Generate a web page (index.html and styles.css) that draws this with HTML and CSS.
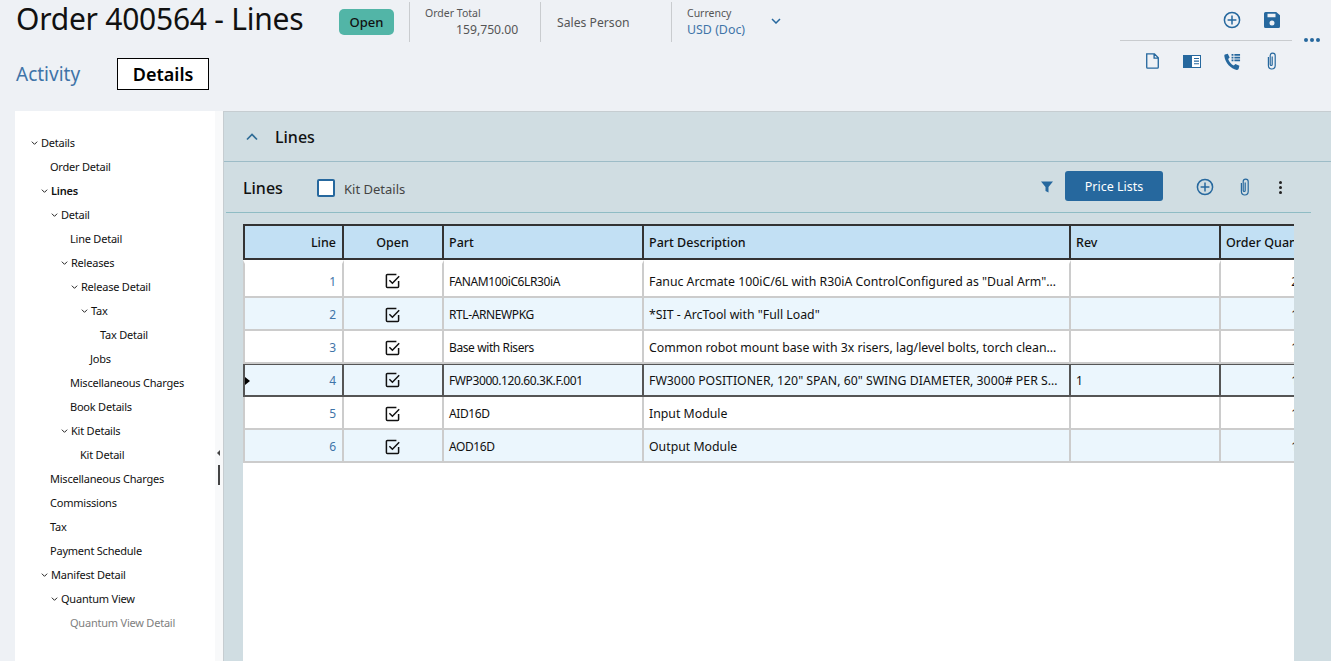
FILE: index.html
```html
<!DOCTYPE html>
<html lang="en">
<head>
    <meta charset="UTF-8">
    <title>Order 400564 - Lines</title>
    <link rel="stylesheet" href="styles.css">
</head>
<body>
<svg class="defs" width="0" height="0">
    <symbol id="chev-down" viewBox="0 0 10 6"><path d="M1 1l4 4 4-4" fill="none" stroke="currentColor" stroke-width="1.5"/></symbol>
    <symbol id="plus-circle" viewBox="0 0 18 18"><circle cx="9" cy="9" r="7.6" fill="none" stroke="currentColor" stroke-width="1.5"/><path d="M9 4.6v8.8M4.6 9h8.8" stroke="currentColor" stroke-width="1.5"/></symbol>
    <symbol id="clip" viewBox="0 0 12 18"><path d="M6.200 4.500v8a1 1 0 0 1-2 0V3.600a2.500 2.500 0 0 1 5 0v10a3.400 3.400 0 0 1-6.800 0V5" fill="none" stroke="currentColor" stroke-width="1.200"/></symbol>
    <symbol id="check" viewBox="0 0 16 16"><path d="M13.6 8v5.4a1 1 0 0 1-1 1H2.4a1 1 0 0 1-1-1V2.6a1 1 0 0 1 1-1h9" fill="none" stroke="#111" stroke-width="1.5"/><path d="M4.4 7.2l3 3 6.8-7" fill="none" stroke="#111" stroke-width="1.5"/></symbol>
</svg>

<header class="top">
    <div class="top-left">
        <div class="title-row">
            <h1 class="title">Order 400564 - Lines</h1>
            <span class="badge">Open</span>
            <div class="stat stat-total">
                <span class="stat-label">Order Total</span>
                <span class="stat-num">159,750.00</span>
            </div>
            <div class="stat stat-sales">
                <span class="stat-plain">Sales Person</span>
            </div>
            <div class="stat stat-currency">
                <span class="stat-label">Currency</span>
                <span class="stat-link">USD (Doc)</span>
            </div>
            <svg class="currency-chev"><use href="#chev-down"/></svg>
        </div>
        <nav class="tabs">
            <a class="tab">Activity</a>
            <a class="tab tab-active">Details</a>
        </nav>
    </div>
    <div class="tools">
        <div class="tools-box">
            <div class="tools-row tools-row-top">
                <svg class="ic ic-plus"><use href="#plus-circle"/></svg>
                <svg class="ic ic-save" viewBox="0 0 16 16"><path fill="currentColor" fill-rule="evenodd" d="M1.5 0h10.700L16 3.300V14.500A1.500 1.500 0 0 1 14.500 16h-13A1.500 1.500 0 0 1 0 14.500v-13A1.500 1.500 0 0 1 1.500 0zM3.500 1.800v3.400h8V1.800zM8 8.400a2.500 2.500 0 1 0 0 5 2.500 2.500 0 0 0 0-5z"/></svg>
            </div>
            <div class="tools-row tools-row-bottom">
                <svg class="ic ic-doc" viewBox="0 0 16 18"><path d="M1.500 1h8.700l4.300 4.300v10.700a1 1 0 0 1-1 1h-11a1 1 0 0 1-1-1zM9.800 1v4.800h4.700" fill="none" stroke="currentColor" stroke-width="1.500"/></svg>
                <svg class="ic ic-panel" viewBox="0 0 18 13"><rect x=".5" y=".5" width="17" height="12" fill="#fff" stroke="currentColor"/><path fill="currentColor" d="M0 0h9v13H0zM11 3h5v1.100h-5zM11 5.600h5v1.100h-5zM11 8.200h5v1.100h-5z"/></svg>
                <svg class="ic ic-phone" viewBox="0 0 18 18"><path fill="currentColor" d="M1 1.500 4 .8l2 4-1.600 1.500c.9 2.900 3.200 5.600 6 7l1.700-1.700 4.200 2-.8 3.200c-.2.800-1 1.200-2 1.100C7.200 16.800 1.300 10.600.4 3.500.3 2.500.4 1.700 1 1.500z"/><path fill="currentColor" d="M8 1h2v1.800H8zM11 1h6v1.800h-6zM8 4h2v1.800H8zM11 4h6v1.800h-6zM8 7h2v1.800H8zM11 7h6v1.800h-6z"/></svg>
                <svg class="ic ic-clip"><use href="#clip"/></svg>
            </div>
        </div>
        <div class="more"><i></i><i></i><i></i></div>
    </div>
</header>

<div class="main">
    <aside class="side">
        <ul class="tree">
            <li class="lv0 has-kids"><svg class="tw"><use href="#chev-down"/></svg>Details</li>
            <li class="leaf1">Order Detail</li>
            <li class="lv1 has-kids strong"><svg class="tw"><use href="#chev-down"/></svg>Lines</li>
            <li class="lv2 has-kids"><svg class="tw"><use href="#chev-down"/></svg>Detail</li>
            <li class="leaf3">Line Detail</li>
            <li class="lv3 has-kids"><svg class="tw"><use href="#chev-down"/></svg>Releases</li>
            <li class="lv4 has-kids"><svg class="tw"><use href="#chev-down"/></svg>Release Detail</li>
            <li class="lv5 has-kids"><svg class="tw"><use href="#chev-down"/></svg>Tax</li>
            <li class="leaf6">Tax Detail</li>
            <li class="leaf5">Jobs</li>
            <li class="leaf3">Miscellaneous Charges</li>
            <li class="leaf3">Book Details</li>
            <li class="lv3 has-kids"><svg class="tw"><use href="#chev-down"/></svg>Kit Details</li>
            <li class="leaf4">Kit Detail</li>
            <li class="leaf1">Miscellaneous Charges</li>
            <li class="leaf1">Commissions</li>
            <li class="leaf1">Tax</li>
            <li class="leaf1">Payment Schedule</li>
            <li class="lv1 has-kids"><svg class="tw"><use href="#chev-down"/></svg>Manifest Detail</li>
            <li class="lv2 has-kids"><svg class="tw"><use href="#chev-down"/></svg>Quantum View</li>
            <li class="leaf3 muted">Quantum View Detail</li>
        </ul>
        <div class="side-strip"></div>
        <span class="split-arrow"></span>
        <span class="split-bar"></span>
    </aside>

    <section class="panel">
        <div class="panel-head">
            <svg class="panel-chev" viewBox="0 0 12 8"><path d="M1 6.500l5-5 5 5" fill="none" stroke="currentColor" stroke-width="1.700"/></svg>
            <h2 class="panel-title">Lines</h2>
        </div>
        <div class="grid-bar">
            <h3 class="grid-title">Lines</h3>
            <span class="check-box"></span>
            <span class="check-label">Kit Details</span>
            <svg class="ic-filter" viewBox="0 0 12 12"><path fill="currentColor" d="M0 .5h12L7.500 6v5.500l-3-1.500V6z"/></svg>
            <button class="btn">Price Lists</button>
            <svg class="ic ic-plus bar-plus"><use href="#plus-circle"/></svg>
            <svg class="ic ic-clip bar-clip"><use href="#clip"/></svg>
            <div class="kebab"><i></i><i></i><i></i></div>
        </div>
        <div class="grid-wrap">
            <table class="grid">
                <colgroup>
                    <col class="c-line"><col class="c-open"><col class="c-part"><col class="c-desc"><col class="c-rev"><col class="c-qty">
                </colgroup>
                <thead>
                    <tr>
                        <th class="num">Line</th>
                        <th class="mid">Open</th>
                        <th>Part</th>
                        <th>Part Description</th>
                        <th>Rev</th>
                        <th>Order Quan</th>
                    </tr>
                </thead>
                <tbody>
                    <tr>
                        <td class="num link">1</td>
                        <td class="mid"><svg class="tick"><use href="#check"/></svg></td>
                        <td class="part">FANAM100iC6LR30iA</td>
                        <td class="desc">Fanuc Arcmate 100iC/6L with R30iA ControlConfigured as "Dual Arm"…</td>
                        <td></td>
                        <td class="num">2</td>
                    </tr>
                    <tr class="alt">
                        <td class="num link">2</td>
                        <td class="mid"><svg class="tick"><use href="#check"/></svg></td>
                        <td class="part">RTL-ARNEWPKG</td>
                        <td class="desc">*SIT - ArcTool with "Full Load"</td>
                        <td></td>
                        <td class="num">1</td>
                    </tr>
                    <tr>
                        <td class="num link">3</td>
                        <td class="mid"><svg class="tick"><use href="#check"/></svg></td>
                        <td class="part">Base with Risers</td>
                        <td class="desc">Common robot mount base with 3x risers, lag/level bolts, torch clean…</td>
                        <td></td>
                        <td class="num">1</td>
                    </tr>
                    <tr class="alt current">
                        <td class="num link"><span class="row-mark"></span>4</td>
                        <td class="mid"><svg class="tick"><use href="#check"/></svg></td>
                        <td class="part">FWP3000.120.60.3K.F.001</td>
                        <td class="desc">FW3000 POSITIONER, 120" SPAN, 60" SWING DIAMETER, 3000# PER S…</td>
                        <td>1</td>
                        <td class="num">1</td>
                    </tr>
                    <tr>
                        <td class="num link">5</td>
                        <td class="mid"><svg class="tick"><use href="#check"/></svg></td>
                        <td class="part">AID16D</td>
                        <td class="desc">Input Module</td>
                        <td></td>
                        <td class="num">1</td>
                    </tr>
                    <tr class="alt">
                        <td class="num link">6</td>
                        <td class="mid"><svg class="tick"><use href="#check"/></svg></td>
                        <td class="part">AOD16D</td>
                        <td class="desc">Output Module</td>
                        <td></td>
                        <td class="num">1</td>
                    </tr>
                </tbody>
            </table>
        </div>
    </section>
</div>
</body>
</html>
```
FILE: styles.css
```css
* {
    box-sizing: border-box;
}
html, body {
    margin: 0;
    height: 661px;
    overflow: hidden;
}
body {
    font-family: "Noto Sans", "Open Sans", Arial, sans-serif;
    background-color: #eef1f5;
    color: #111;
    display: flex;
    flex-direction: column;
}
.defs {
    position: absolute;
}
h1, h2, h3 {
    margin: 0;
    font-weight: 400;
}

/* Header */
.top {
    height: 111px;
    flex: none;
    display: flex;
    justify-content: space-between;
}
.top-left {
    padding-left: 16px;
}
.title-row {
    display: flex;
    align-items: flex-start;
    height: 58px;
}
.title {
    font-size: 30px;
    line-height: 38px;
    letter-spacing: -0.25px;
    width: 323px;
    white-space: nowrap;
}
.badge {
    width: 55px;
    height: 26px;
    margin-top: 9px;
    background-color: #52b5a7;
    border-radius: 5px;
    font-size: 13px;
    font-weight: 500;
    line-height: 26px;
    text-align: center;
}
.stat {
    height: 40px;
    margin-top: 2px;
    border-left: 1px solid #c9cccf;
    display: flex;
    flex-direction: column;
    font-size: 12px;
    color: #555;
}
.stat-total {
    width: 131px;
    margin-left: 15px;
    padding: 4px 0 0 15px;
}
.stat-sales {
    width: 131px;
    padding: 12px 0 0 16px;
}
.stat-currency {
    width: 90px;
    padding: 4px 0 0 15px;
}
.stat-label {
    font-size: 10.5px;
    line-height: 14px;
}
.stat-num {
    font-size: 12.2px;
    line-height: 20px;
    padding-left: 31px;
}
.stat-plain {
    font-size: 12.2px;
    line-height: 18px;
}
.stat-link {
    font-size: 12.4px;
    line-height: 20px;
    color: #3f74a8;
}
.currency-chev {
    width: 10px;
    height: 6px;
    margin: 18px 0 0 10px;
    color: #26689e;
}
.tabs {
    display: flex;
    align-items: center;
}
.tab {
    font-size: 19px;
    color: #3f74a8;
}
.tab-active {
    width: 92px;
    height: 32px;
    margin-left: 37px;
    background-color: #fff;
    border: 1px solid #000;
    color: #000;
    font-size: 18px;
    font-weight: 600;
    line-height: 30px;
    text-align: center;
}

/* Toolbar, top right */
.tools {
    display: flex;
    padding-right: 11px;
}
.tools-box {
    width: 172px;
    color: #26689e;
}
.tools-row {
    display: flex;
    align-items: center;
}
.tools-row-top {
    height: 41px;
    padding: 0 0 1px 103px;
    gap: 23px;
    border-bottom: 1px solid #c9cccf;
}
.tools-row-bottom {
    height: 40px;
    padding-left: 25px;
}
.ic {
    flex: none;
    display: block;
    color: #26689e;
}
.ic-plus {
    width: 18px;
    height: 18px;
}
.ic-save {
    width: 16px;
    height: 16px;
}
.ic-doc {
    width: 15px;
    height: 16px;
    margin-right: 23px;
}
.ic-panel {
    width: 18px;
    height: 13px;
    margin-right: 23px;
}
.ic-phone {
    width: 17px;
    height: 17px;
    margin-right: 25px;
}
.ic-clip {
    width: 12px;
    height: 18px;
}
.more {
    display: flex;
    gap: 2px;
    margin: 38px 0 0 12px;
    height: 5px;
}
.more i, .kebab i {
    display: block;
    width: 4px;
    height: 4px;
    border-radius: 50%;
    background-color: #26689e;
}

/* Body of the page */
.main {
    flex: 1;
    display: flex;
    padding-left: 15px;
    min-height: 0;
}
.side {
    position: relative;
    width: 208px;
    flex: none;
    background-color: #fff;
    padding-top: 20px;
}
.side-strip {
    position: absolute;
    top: 0;
    right: 0;
    bottom: 0;
    width: 8px;
    background-color: #f8f9fa;
}
.split-arrow {
    position: absolute;
    left: 202px;
    top: 339px;
    border: 3px solid transparent;
    border-left: 0;
    border-right: 3px solid #444;
}
.split-bar {
    position: absolute;
    left: 203px;
    top: 354px;
    width: 2px;
    height: 20px;
    background-color: #444;
}
.tree {
    list-style: none;
    margin: 0;
    padding: 0;
    font-size: 11px;
    letter-spacing: -0.22px;
}
.tree li {
    height: 24px;
    line-height: 24px;
    white-space: nowrap;
    display: flex;
    align-items: center;
}
.tree .strong {
    font-weight: 600;
}
.tree .muted {
    color: #808080;
}
.tw {
    width: 7px;
    height: 4px;
    margin-right: 3px;
    flex: none;
    color: #222;
}
.lv0 { padding-left: 16px; }
.lv1 { padding-left: 26px; }
.lv2 { padding-left: 36px; }
.lv3 { padding-left: 46px; }
.lv4 { padding-left: 56px; }
.lv5 { padding-left: 66px; }
.leaf1 { padding-left: 35px; }
.leaf3 { padding-left: 55px; }
.leaf4 { padding-left: 65px; }
.leaf5 { padding-left: 75px; }
.leaf6 { padding-left: 85px; }

/* Lines panel */
.panel {
    flex: 1;
    min-width: 0;
    background-color: #d0dde2;
    border-top: 1px solid #c6cdd1;
    border-left: 1px solid #c6cdd1;
    display: flex;
    flex-direction: column;
}
.panel-head {
    height: 50px;
    flex: none;
    display: flex;
    align-items: center;
    padding-left: 22px;
    border-bottom: 1px solid #9dbcc7;
}
.panel-chev {
    width: 12px;
    height: 8px;
    color: #2f6c96;
    margin-right: 17px;
}
.panel-title {
    font-size: 16px;
    font-weight: 500;
}
.grid-bar {
    height: 51px;
    flex: none;
    margin: 0 20px 0 2px;
    display: flex;
    align-items: center;
    padding-left: 17px;
    border-bottom: 1px solid #8fbcc4;
}
.grid-title {
    font-size: 16px;
    font-weight: 500;
    width: 74px;
    margin-top: 1px;
}
.check-box {
    width: 18px;
    height: 18px;
    margin-top: 2px;
    background-color: #fff;
    border: 2px solid #26689e;
    border-radius: 2px;
    margin-right: 9px;
}
.check-label {
    font-size: 13px;
    margin-top: 4px;
    color: #444;
    flex: 1;
}
.ic-filter {
    width: 12px;
    height: 12px;
    color: #26689e;
    margin-right: 12px;
}
.btn {
    width: 98px;
    height: 30px;
    margin-bottom: 2px;
    background-color: #26689e;
    color: #fff;
    border: 0;
    border-radius: 3px;
    font: 12.5px "Noto Sans", sans-serif;
    margin-right: 33px;
}
.bar-plus {
    margin-right: 25px;
}
.bar-clip {
    margin-right: 28px;
}
.kebab {
    display: flex;
    flex-direction: column;
    gap: 2px;
    margin-right: 29px;
}
.kebab i {
    width: 3px;
    height: 3px;
    background-color: #222;
}

/* Data grid */
.grid-wrap {
    flex: 1;
    margin: 11px 37px 0 19px;
    background-color: #fff;
    overflow: hidden;
}
.grid {
    table-layout: fixed;
    width: 1063px;
    border-collapse: separate;
    border-spacing: 0;
    font-size: 12px;
}
.c-line { width: 101px; }
.c-open { width: 100px; }
.c-part { width: 200px; }
.c-desc { width: 427px; }
.c-rev { width: 150px; }
.c-qty { width: 85px; }
.grid th {
    height: 36px;
    padding: 0 6px 0 5px;
    background-color: #c2e0f4;
    border: solid #333;
    border-width: 2px 2px 2px 0;
    font-size: 12.5px;
    font-weight: 500;
    text-align: left;
    white-space: nowrap;
    overflow: hidden;
}
.grid th:first-child {
    border-left: 2px solid #333;
}
.grid th.num {
    text-align: right;
}
.grid th.mid {
    text-align: center;
}
.grid td {
    height: 33px;
    padding: 2px 6px 0 5px;
    background-color: #fff;
    border: solid #ccc;
    border-width: 0 2px 2px 0;
    white-space: nowrap;
    overflow: hidden;
}
.grid td:first-child {
    border-left: 2px solid #ccc;
}
.grid tbody tr:first-child td {
    height: 38px;
    border-top: 4px solid #fff;
}
.grid tr.alt td {
    background-color: #ebf6fd;
}
.grid tr.current td {
    padding-top: 0;
    border-color: #555;
    border-top: 1px solid #555;
}
.grid td.num {
    text-align: right;
}
.grid td.mid {
    text-align: center;
}
.grid td.link {
    color: #3f74a8;
}
.grid td.part {
    letter-spacing: -0.4px;
}
.grid td.desc {
    font-size: 12.3px;
}
.tick {
    display: block;
    width: 16px;
    height: 16px;
    margin: 0 auto;
}
.row-mark {
    float: left;
    margin-left: -5px;
    margin-top: 5px;
    border: 4px solid transparent;
    border-left: 5px solid #000;
    border-right: 0;
}
```
